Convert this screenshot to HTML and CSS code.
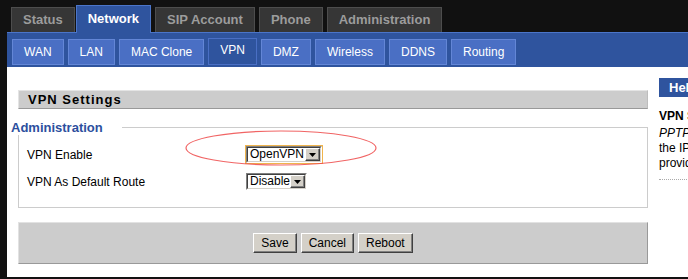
FILE: index.html
```html
<!DOCTYPE html>
<html lang="en">
<head>
  <meta charset="UTF-8">
  <title>VPN Settings</title>
  <link rel="stylesheet" href="styles.css">
</head>
<body>
  <div class="top-tabs">
    <a href="#">Status</a>
    <a href="#" class="active">Network</a>
    <a href="#">SIP Account</a>
    <a href="#">Phone</a>
    <a href="#">Administration</a>
  </div>

  <div class="sub-tabs">
    <a href="#">WAN</a>
    <a href="#">LAN</a>
    <a href="#">MAC Clone</a>
    <a href="#" class="active">VPN</a>
    <a href="#">DMZ</a>
    <a href="#">Wireless</a>
    <a href="#">DDNS</a>
    <a href="#">Routing</a>
  </div>

  <div class="content">
    <div class="main">
      <div class="section-title">VPN Settings</div>

      <fieldset class="group">
        <legend>Administration</legend>
        <div class="row">
          <label for="vpnEnable">VPN Enable</label>
          <span class="combo focused">
            <span class="combo-in">
              <select id="vpnEnable" class="wide">
                <option>Disable</option>
                <option>PPTP</option>
                <option selected>OpenVPN</option>
              </select>
              <span class="drop"><svg width="7" height="4" viewBox="0 0 7 4"><path d="M0 0h7L3.5 4z" fill="#000"/></svg></span>
            </span>
          </span>
        </div>
        <div class="row">
          <label for="vpnRoute">VPN As Default Route</label>
          <span class="combo">
            <span class="combo-in">
              <select id="vpnRoute" class="narrow">
                <option>Enable</option>
                <option selected>Disable</option>
              </select>
              <span class="drop"><svg width="7" height="4" viewBox="0 0 7 4"><path d="M0 0h7L3.5 4z" fill="#000"/></svg></span>
            </span>
          </span>
        </div>
      </fieldset>

      <div class="buttons">
        <button type="button">Save</button>
        <button type="button">Cancel</button>
        <button type="button">Reboot</button>
      </div>

      <!-- red circle marking the option -->
      <svg class="mark" width="194" height="39" viewBox="0 0 194 39">
        <ellipse cx="97" cy="18" rx="95" ry="17" fill="none" stroke="#ef4a4a" stroke-width="1.2"/>
      </svg>
    </div>

    <div class="help">
      <h3>Help</h3>
      <div class="help-title">VPN Settings:</div>
      <p><i>PPTP/OpenVPN</i>: select the VPN type and enter<br>
      the IP address of the VPN server<br>
      provided by your VPN administrator.</p>
    </div>
  </div>
</body>
</html>
```

FILE: styles.css
```css
* {
  box-sizing: border-box;
}

body {
  margin: 0;
  padding-left: 7px;
  height: 279px;
  background: #111;
  overflow: hidden;
  font-family: "Liberation Sans", Arial, sans-serif;
  font-size: 12px;
  color: #000;
}

/* main menu */
.top-tabs {
  display: flex;
  align-items: flex-end;
  height: 32px;
  padding-left: 4px;
}

.top-tabs a {
  height: 25px;
  line-height: 24px;
  padding: 0 11px;
  margin-right: 4px;
  background: #363636;
  border: 1px solid #4d4d4d;
  border-bottom: none;
  color: #9c9c9c;
  font-size: 13px;
  font-weight: bold;
  text-decoration: none;
}

.top-tabs a.active {
  position: relative;
  z-index: 1;
  height: 28px;
  line-height: 26px;
  margin-left: -3px;
  margin-bottom: -1px;
  background: #2f549e;
  border-color: #4b75c9;
  color: #fff;
}

/* sub menu */
.sub-tabs {
  display: flex;
  align-items: flex-end;
  gap: 4px;
  height: 35px;
  padding: 0 5px 2px;
  background: #2f549e;
  border-top: 1px solid #4b75c9;
}

.sub-tabs a {
  height: 26px;
  line-height: 24px;
  padding: 0 11px;
  background: #4a6fc4;
  border: 1px solid #6386d6;
  color: #fff;
  text-decoration: none;
}

.sub-tabs a.active {
  height: 27px;
  line-height: 23px;
  background: #2f549e;
  border-color: #4a6fc4;
}

/* page body */
.content {
  display: flex;
  height: 210px;
  background: #fff;
  overflow: hidden;
}

.main {
  position: relative;
  flex: none;
  width: 630px;
  margin-left: 11px;
  padding-top: 23px;
}

.section-title {
  height: 19px;
  line-height: 17px;
  padding-left: 9px;
  background: #ccc;
  border: 1px solid #e4e4e4;
  border-right-color: #bdbdbd;
  border-bottom-color: #999;
  font-size: 13px;
  font-weight: bold;
  letter-spacing: 1px;
}

.group {
  margin: 11px 0 0;
  padding: 6px 0 12px 8px;
  border: 1px solid #ccc;
}

.group legend {
  margin-left: -16px;
  padding: 0 19px 0 0;
  background: #fff;
  color: #2c4f9e;
  font-size: 13px;
  font-weight: bold;
  line-height: 15px;
}

.row {
  display: flex;
  align-items: center;
  height: 27px;
}

.row label {
  width: 219px;
}

/* classic combo box */
.combo {
  display: inline-flex;
  height: 17px;
  border: 1px solid;
  border-color: #808080 #fff #fff #808080;
}

.combo.focused {
  box-shadow: 0 0 0 1px #f0b44c;
}

.combo-in {
  display: flex;
  border: 1px solid;
  border-color: #404040 #d4d0c8 #d4d0c8 #404040;
  background: #fff;
}

.combo select {
  appearance: none;
  -webkit-appearance: none;
  height: 13px;
  margin: 0;
  padding: 0 0 0 2px;
  border: 0;
  background: #fff;
  font-family: inherit;
  font-size: 12px;
  line-height: 13px;
  color: #000;
  outline: none;
}

.combo select.wide {
  width: 57px;
}

.combo select.narrow {
  width: 42px;
}

.drop {
  display: flex;
  align-items: center;
  justify-content: center;
  width: 15px;
  height: 13px;
  background: #d4d0c8;
  border: 1px solid;
  border-color: #fff #404040 #404040 #fff;
  box-shadow: inset -1px -1px #808080;
}

.buttons {
  display: flex;
  justify-content: center;
  align-items: center;
  gap: 4px;
  height: 42px;
  margin-top: 14px;
  background: #ccc;
  border: 1px solid;
  border-color: #e2e2e2 #999 #999 #e2e2e2;
}

.buttons button {
  height: 20px;
  padding: 0 7px;
  background: #d4d0c8;
  border: 1px solid;
  border-color: #fff #404040 #404040 #fff;
  box-shadow: inset -1px -1px #808080;
  font-family: inherit;
  font-size: 12px;
  color: #000;
}

.mark {
  position: absolute;
  left: 166px;
  top: 63px;
  pointer-events: none;
  opacity: 0.85;
}

/* help column */
.help {
  flex: none;
  width: 300px;
  margin: 11px 0 0 11px;
}

.help h3 {
  margin: 0;
  height: 19px;
  line-height: 19px;
  padding-left: 10px;
  background: #2f549e;
  color: #fff;
  font-size: 13px;
}

.help-title {
  margin-top: 12px;
  line-height: 15px;
  font-weight: bold;
  font-size: 12px;
}

.help p {
  margin: 2px 0 0;
  padding-bottom: 8px;
  line-height: 15px;
  border-bottom: 1px dotted #aaa;
}
```
